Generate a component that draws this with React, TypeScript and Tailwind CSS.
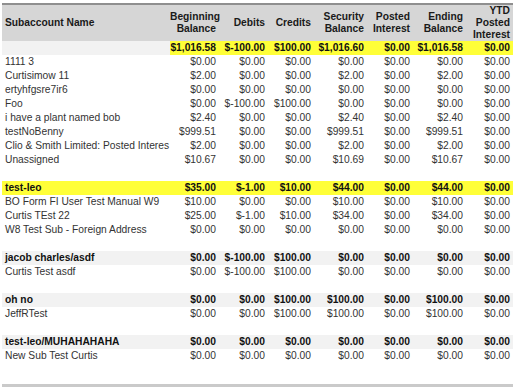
import React from "react";

type Row = {
  name?: string;
  vals?: string[];
  kind: "total" | "group" | "item" | "blank";
  mark?: "values" | "all";
};

const rows: Row[] = [
  { kind: "total", mark: "values", name: "", vals: ["$1,016.58", "$-100.00", "$100.00", "$1,016.60", "$0.00", "$1,016.58", "$0.00"] },
  { kind: "item", name: "1111 3", vals: ["$0.00", "$0.00", "$0.00", "$0.00", "$0.00", "$0.00", "$0.00"] },
  { kind: "item", name: "Curtisimow 11", vals: ["$2.00", "$0.00", "$0.00", "$2.00", "$0.00", "$2.00", "$0.00"] },
  { kind: "item", name: "ertyhfgsre7ir6", vals: ["$0.00", "$0.00", "$0.00", "$0.00", "$0.00", "$0.00", "$0.00"] },
  { kind: "item", name: "Foo", vals: ["$0.00", "$-100.00", "$100.00", "$0.00", "$0.00", "$0.00", "$0.00"] },
  { kind: "item", name: "i have a plant named bob", vals: ["$2.40", "$0.00", "$0.00", "$2.40", "$0.00", "$2.40", "$0.00"] },
  { kind: "item", name: "testNoBenny", vals: ["$999.51", "$0.00", "$0.00", "$999.51", "$0.00", "$999.51", "$0.00"] },
  { kind: "item", name: "Clio & Smith Limited: Posted Interes", vals: ["$2.00", "$0.00", "$0.00", "$2.00", "$0.00", "$2.00", "$0.00"] },
  { kind: "item", name: "Unassigned", vals: ["$10.67", "$0.00", "$0.00", "$10.69", "$0.00", "$10.67", "$0.00"] },
  { kind: "blank" },
  { kind: "group", mark: "all", name: "test-leo", vals: ["$35.00", "$-1.00", "$10.00", "$44.00", "$0.00", "$44.00", "$0.00"] },
  { kind: "item", name: "BO Form FI User Test Manual W9", vals: ["$10.00", "$0.00", "$0.00", "$10.00", "$0.00", "$10.00", "$0.00"] },
  { kind: "item", name: "Curtis TEst 22", vals: ["$25.00", "$-1.00", "$10.00", "$34.00", "$0.00", "$34.00", "$0.00"] },
  { kind: "item", name: "W8 Test Sub - Foreign Address", vals: ["$0.00", "$0.00", "$0.00", "$0.00", "$0.00", "$0.00", "$0.00"] },
  { kind: "blank" },
  { kind: "group", name: "jacob charles/asdf", vals: ["$0.00", "$-100.00", "$100.00", "$0.00", "$0.00", "$0.00", "$0.00"] },
  { kind: "item", name: "Curtis Test asdf", vals: ["$0.00", "$-100.00", "$100.00", "$0.00", "$0.00", "$0.00", "$0.00"] },
  { kind: "blank" },
  { kind: "group", name: "oh no", vals: ["$0.00", "$0.00", "$100.00", "$100.00", "$0.00", "$100.00", "$0.00"] },
  { kind: "item", name: "JeffRTest", vals: ["$0.00", "$0.00", "$100.00", "$100.00", "$0.00", "$100.00", "$0.00"] },
  { kind: "blank" },
  { kind: "group", name: "test-leo/MUHAHAHAHA", vals: ["$0.00", "$0.00", "$0.00", "$0.00", "$0.00", "$0.00", "$0.00"] },
  { kind: "item", name: "New Sub Test Curtis", vals: ["$0.00", "$0.00", "$0.00", "$0.00", "$0.00", "$0.00", "$0.00"] },
];

const App = () => {
  return (
    <div className="w-[518px] h-[388px] bg-white overflow-hidden font-['Liberation_Sans',Arial,sans-serif] text-[10.25px]">
      <table className="table-fixed border-collapse w-[511px] ml-[2px] mt-[3px]">
        <colgroup>
          <col className="w-[168px]" />
          <col className="w-[49px]" />
          <col className="w-[49px]" />
          <col className="w-[46px]" />
          <col className="w-[53px]" />
          <col className="w-[46px]" />
          <col className="w-[53px]" />
          <col className="w-[47px]" />
        </colgroup>
        <thead>
          <tr className="h-[35px] bg-[#d6d6d6] border-t-2 border-[#8f8f8f] text-[#1a1a1a] font-bold leading-[12px]">
            <th className="text-left pl-[3px] align-middle">Subaccount Name</th>
            <th className="text-right pr-[3px]">Beginning<br />Balance</th>
            <th className="text-right pr-[3px]">Debits</th>
            <th className="text-right pr-[3px]">Credits</th>
            <th className="text-right pr-[3px]">Security<br />Balance</th>
            <th className="text-right pr-[3px]">Posted<br />Interest</th>
            <th className="text-right pr-[3px]">Ending<br />Balance</th>
            <th className="text-right pr-[3px]">YTD<br />Posted<br />Interest</th>
          </tr>
        </thead>
        <tbody>
          {rows.map((r, i) => {
            if (r.kind === "blank") {
              return (
                <tr key={i} className="h-[14px]">
                  <td colSpan={8} className="p-0"></td>
                </tr>
              );
            }
            const bold = r.kind !== "item";
            const rowBg =
              r.mark === "all" ? "bg-[#ffff38]" : bold ? "bg-[#f2f2f2]" : "bg-white";
            return (
              <tr
                key={i}
                className={`h-[14px] leading-[14px] ${rowBg} ${
                  bold ? "font-bold text-[#111]" : "text-[#333]"
                }`}
              >
                <td className="p-0 pl-[3px] whitespace-nowrap">{r.name}</td>
                {r.vals!.map((v, j) => (
                  <td
                    key={j}
                    className={`p-0 text-right pr-[3px] whitespace-nowrap ${
                      r.mark === "values" ? "bg-[#ffff38]" : ""
                    }`}
                  >
                    {v}
                  </td>
                ))}
              </tr>
            );
          })}
        </tbody>
      </table>
      <div className="w-[511px] ml-[2px] mt-[21px] h-[3px] bg-[#cacaca]" />
    </div>
  );
};

export default App;
